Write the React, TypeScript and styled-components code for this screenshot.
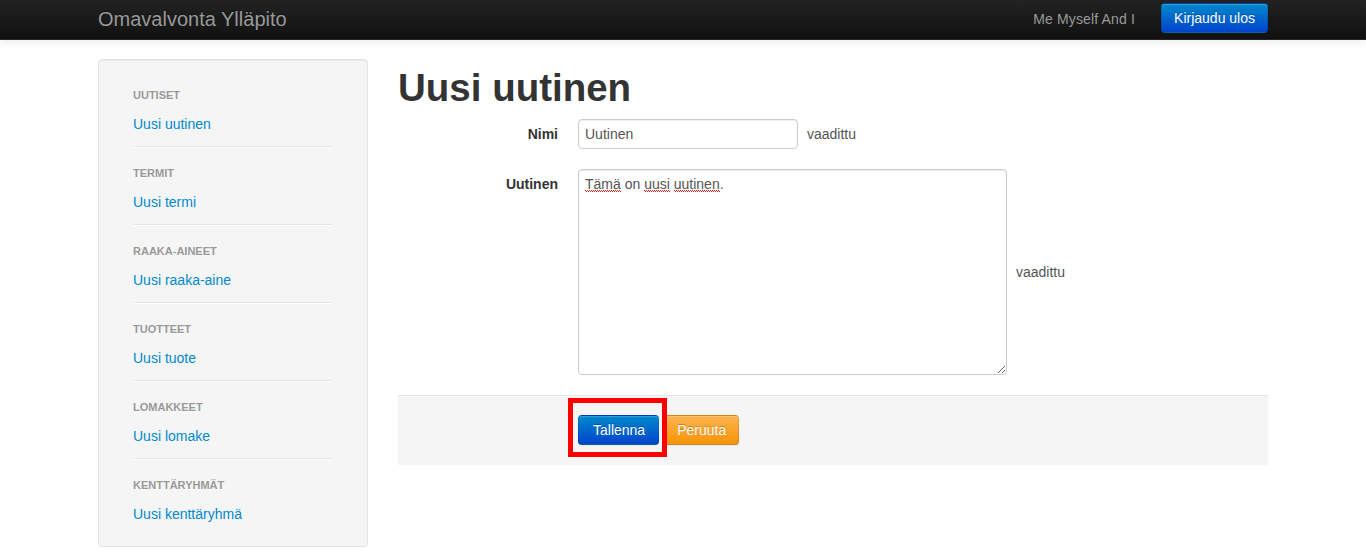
import React from "react";
import styled, { createGlobalStyle, css } from "styled-components";

const GlobalStyle = createGlobalStyle`
  html, body { margin: 0; padding: 0; background: #fff; }
  body {
    font-family: "Liberation Sans", Arial, Helvetica, sans-serif;
    font-size: 14px;
    line-height: 20px;
    color: #333;
  }
  * { box-sizing: border-box; }
`;

const Navbar = styled.header`
  height: 40px;
  background-color: #1b1b1b;
  background-image: linear-gradient(to bottom, #222222, #111111);
  border-bottom: 1px solid #252525;
  box-shadow: 0 1px 10px rgba(0, 0, 0, 0.1);
`;

const NavInner = styled.div`
  width: 1170px;
  margin: 0 auto;
  height: 100%;
  display: flex;
  align-items: center;
`;

const Brand = styled.a`
  font-size: 20px;
  font-weight: 200;
  line-height: 20px;
  color: #999;
  text-decoration: none;
  text-shadow: 0 -1px 0 rgba(0, 0, 0, 0.25);
  margin-top: -1px;
`;

const NavRight = styled.div`
  margin-left: auto;
  display: flex;
  align-items: center;
  gap: 26px;
  margin-top: -3px;
`;

const NavText = styled.span`
  color: #999;
  font-size: 14px;
  letter-spacing: 0.15px;
  margin-top: 2px;
`;

const Button = styled.button<{ $variant: "primary" | "warning" }>`
  display: inline-block;
  padding: 4px 12px;
  font-family: inherit;
  font-size: 14px;
  line-height: 20px;
  color: #fff;
  border-radius: 4px;
  border: 1px solid;
  border-color: rgba(0, 0, 0, 0.1) rgba(0, 0, 0, 0.1) rgba(0, 0, 0, 0.25);
  text-shadow: 0 -1px 0 rgba(0, 0, 0, 0.25);
  box-shadow: inset 0 1px 0 rgba(255, 255, 255, 0.2), 0 1px 2px rgba(0, 0, 0, 0.05);
  cursor: pointer;
  ${(p) =>
    p.$variant === "primary"
      ? css`
          background-color: #006dcc;
          background-image: linear-gradient(to bottom, #0088cc, #0044cc);
        `
      : css`
          background-color: #faa732;
          background-image: linear-gradient(to bottom, #fbb450, #f89406);
        `}
`;

const SaveButton = styled(Button)`
  padding: 4px 13px 4px 14px;
`;

const Container = styled.div`
  width: 1170px;
  margin: 0 auto;
  padding-top: 19px;
  display: grid;
  grid-template-columns: 270px 870px;
  column-gap: 30px;
  align-items: start;
`;

const Well = styled.aside`
  background: #f5f5f5;
  border: 1px solid #e3e3e3;
  border-radius: 4px;
  box-shadow: inset 0 1px 1px rgba(0, 0, 0, 0.05);
  padding: 19px;
`;

const NavList = styled.ul`
  list-style: none;
  margin: 0;
  padding: 0 15px;
`;

const NavHeader = styled.li`
  display: block;
  padding: 6px 0 3px;
  font-size: 11px;
  font-weight: bold;
  line-height: 20px;
  color: #999;
  text-transform: uppercase;
  text-shadow: 0 1px 0 rgba(255, 255, 255, 0.5);
`;

const NavItem = styled.li`
  padding-top: 3px;
`;

const NavLink = styled.a`
  display: block;
  padding: 3px 0;
  color: #0088cc;
  text-decoration: none;
  text-shadow: 0 1px 0 rgba(255, 255, 255, 0.5);
`;

const Divider = styled.li`
  height: 1px;
  margin: 9px 1px;
  background: #e5e5e5;
  border-bottom: 1px solid #fff;
  box-sizing: content-box;
`;

const Main = styled.main``;

const Title = styled.h1`
  margin: 9px 0 11px;
  font-size: 38.5px;
  line-height: 40px;
  font-weight: bold;
  color: #333;
`;

const ControlGroup = styled.div`
  display: grid;
  grid-template-columns: 160px 1fr;
  column-gap: 20px;
  margin-bottom: 20px;
`;

const Label = styled.label`
  padding-top: 5px;
  text-align: right;
  font-weight: bold;
`;

const Controls = styled.div`
  display: flex;
  align-items: center;
  gap: 9px;
`;

const fieldBase = css`
  border: 1px solid #ccc;
  border-radius: 4px;
  box-shadow: inset 0 1px 1px rgba(0, 0, 0, 0.075);
  background: #fff;
  color: #555;
  font-family: inherit;
  font-size: 14px;
  line-height: 20px;
  padding: 4px 6px;
`;

const Input = styled.input`
  ${fieldBase};
  width: 220px;
  height: 30px;
  outline: none;
`;

const TextBox = styled.div`
  ${fieldBase};
  width: 429px;
  height: 206px;
  resize: both;
  overflow: auto;
`;

const Misspelled = styled.span`
  background-image: repeating-linear-gradient(
      90deg,
      #e02020 0 1px,
      transparent 1px 2px
    ),
    repeating-linear-gradient(90deg, transparent 0 1px, #e02020 1px 2px);
  background-size: 100% 1px, 100% 1px;
  background-position: left calc(100% - 1px), left 100%;
  background-repeat: no-repeat;
`;

const HelpInline = styled.span`
  color: #555;
`;

const FormActions = styled.div`
  margin-top: 20px;
  padding: 19px 20px 20px 180px;
  background: #f5f5f5;
  border-top: 1px solid #e5e5e5;
  display: flex;
  gap: 6px;
`;

const Highlight = styled.span`
  position: relative;
  display: inline-flex;
  &::after {
    content: "";
    position: absolute;
    left: -10px;
    right: -8px;
    top: -17px;
    bottom: -12px;
    border: 5px solid #ff0000;
    pointer-events: none;
  }
`;

const CancelButton = styled(Button)`
  margin-left: -1px;
`;

const sections = [
  { header: "Uutiset", link: "Uusi uutinen" },
  { header: "Termit", link: "Uusi termi" },
  { header: "Raaka-aineet", link: "Uusi raaka-aine" },
  { header: "Tuotteet", link: "Uusi tuote" },
  { header: "Lomakkeet", link: "Uusi lomake" },
  { header: "Kenttäryhmät", link: "Uusi kenttäryhmä" },
];

export default function App() {
  return (
    <>
      <GlobalStyle />
      <Navbar>
        <NavInner>
          <Brand href="#">Omavalvonta Ylläpito</Brand>
          <NavRight>
            <NavText>Me Myself And I</NavText>
            <Button $variant="primary">Kirjaudu ulos</Button>
          </NavRight>
        </NavInner>
      </Navbar>
      <Container>
        <Well>
          <NavList>
            {sections.map((s, i) => (
              <React.Fragment key={s.header}>
                <NavHeader>{s.header}</NavHeader>
                <NavItem>
                  <NavLink href="#">{s.link}</NavLink>
                </NavItem>
                {i < sections.length - 1 && <Divider />}
              </React.Fragment>
            ))}
          </NavList>
        </Well>
        <Main>
          <Title>Uusi uutinen</Title>
          <form onSubmit={(e) => e.preventDefault()}>
            <ControlGroup>
              <Label>Nimi</Label>
              <Controls>
                <Input defaultValue="Uutinen" />
                <HelpInline>vaadittu</HelpInline>
              </Controls>
            </ControlGroup>
            <ControlGroup>
              <Label>Uutinen</Label>
              <Controls>
                <TextBox role="textbox" aria-multiline="true">
                  <Misspelled>Tämä</Misspelled> on <Misspelled>uusi</Misspelled>{" "}
                  <Misspelled>uutinen</Misspelled>.
                </TextBox>
                <HelpInline>vaadittu</HelpInline>
              </Controls>
            </ControlGroup>
            <FormActions>
              <Highlight>
                <SaveButton $variant="primary" type="submit">
                  Tallenna
                </SaveButton>
              </Highlight>
              <CancelButton $variant="warning" type="button">
                Peruuta
              </CancelButton>
            </FormActions>
          </form>
        </Main>
      </Container>
    </>
  );
}
